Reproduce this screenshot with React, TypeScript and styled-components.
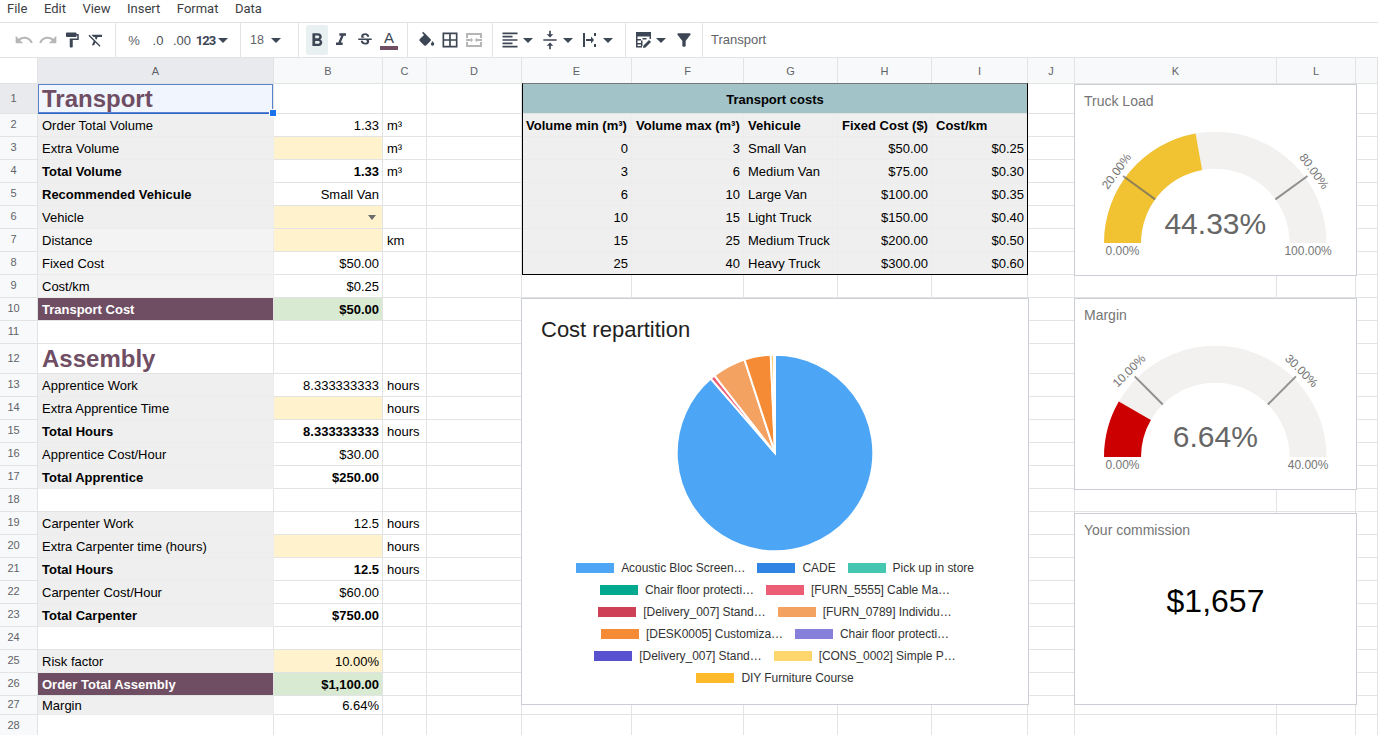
import styled, { createGlobalStyle } from 'styled-components'
import {
  MdBorderAll,
  MdFilterAlt,
  MdFormatAlignLeft,
  MdFormatBold,
  MdFormatClear,
  MdFormatItalic,
  MdFormatPaint,
  MdRedo,
  MdStrikethroughS,
  MdUndo,
  MdVerticalAlignCenter,
} from 'react-icons/md'

import type { ReactNode } from 'react'

const PURPLE = '#6f4e64'
const GREY = '#efefef'
const LIGHT_GREY = '#f3f3f3'
const INPUT = '#fff2cc'
const GREEN = '#d9ead3'
const TEAL = '#a2c4c9'
const LINE = '#e2e3e3'
const ICON = '#3c4654'

const COLUMNS = ['A', 'B', 'C', 'D', 'E', 'F', 'G', 'H', 'I', 'J', 'K', 'L', 'M']
const TEMPLATE = '38px 236px 109px 44px 95px 110px 112px 94px 94px 96px 47px 202px 79px 22px'

const GlobalStyle = createGlobalStyle`
  html, body {
    margin: 0;
    height: 100%;
    overflow: hidden;
    background: #fff;
  }
`

const Page = styled.div`
  width: 1378px;
  height: 735px;
  overflow: hidden;
  font-family: 'Liberation Sans', Arial, sans-serif;
  color: #000;
`

const MenuBar = styled.div`
  display: flex;
  align-items: center;
  gap: 16.5px;
  height: 23px;
  box-sizing: border-box;
  padding: 0 0 5px 7px;
  border-bottom: 1px solid ${LINE};
  font-family: Roboto, sans-serif;
  font-size: 13px;
  color: #3c4043;
`

const Toolbar = styled.div`
  display: flex;
  height: 35px;
  box-sizing: border-box;
  border-bottom: 1px solid ${LINE};
`

const ToolGroup = styled.div<{ $width: number; $pad: number; $gap?: number }>`
  display: flex;
  align-items: center;
  flex: none;
  width: ${(p) => p.$width}px;
  box-sizing: border-box;
  padding-left: ${(p) => p.$pad}px;
  gap: ${(p) => p.$gap ?? 0}px;
  border-right: 1px solid ${LINE};
`

const ToolSlot = styled.div<{ $off?: boolean; $active?: boolean; $wide?: number }>`
  display: flex;
  align-items: center;
  justify-content: center;
  flex: none;
  width: ${(p) => p.$wide ?? 24}px;
  height: 30px;
  border-radius: 2px;
  color: ${(p) => (p.$off ? '#b4b6b8' : ICON)};
  background: ${(p) => (p.$active ? '#e8f0f1' : 'transparent')};
  font-size: 13px;
`

const ActiveSlot = styled(ToolSlot)`
  width: 22px;
  margin: 0 1px;
`

const FormatText = styled.span<{ $muted?: boolean }>`
  font-size: 13px;
  color: ${(p) => (p.$muted ? '#5f6368' : '#4a4f55')};
`

const NumberFormat = styled.span`
  font-family: 'Roboto', sans-serif;
  font-size: 13px;
  font-weight: 700;
  letter-spacing: -1px;
  color: ${ICON};
`

const Caret = styled.span<{ $color?: string }>`
  flex: none;
  width: 0;
  height: 0;
  margin: 0 auto;
  border-left: 5px solid transparent;
  border-right: 5px solid transparent;
  border-top: 5px solid ${(p) => p.$color ?? ICON};
`

const CaretSlot = styled.div`
  display: flex;
  flex: none;
  width: 11px;
`

const ToolPair = styled.div`
  display: flex;
  align-items: center;
`

const FontSize = styled.div`
  display: flex;
  align-items: center;
  justify-content: space-between;
  flex: 1;
  padding-right: 10px;
  font-size: 12.5px;
  color: #5f6368;
`

const TextColor = styled.div`
  display: flex;
  flex-direction: column;
  align-items: center;
  width: 18px;
  font-size: 15px;
  line-height: 15px;
  color: ${ICON};
`

const TextColorBar = styled.span`
  display: block;
  width: 18px;
  height: 4px;
  margin-top: 1px;
  background: ${PURPLE};
`

const FormulaText = styled.div`
  display: flex;
  align-items: center;
  padding: 0 0 1px 8px;
  font-size: 13px;
  color: #5f6368;
`

const Sheet = styled.div`
  position: relative;
`

const GridRow = styled.div<{ $height: number }>`
  display: grid;
  grid-template-columns: ${TEMPLATE};
  height: ${(p) => p.$height}px;
`

const CornerCell = styled.div`
  box-sizing: border-box;
  border-right: 1px solid ${LINE};
  border-bottom: 1px solid ${LINE};
`

const ColumnHead = styled.div<{ $selected?: boolean }>`
  display: flex;
  align-items: center;
  justify-content: center;
  box-sizing: border-box;
  border-right: 1px solid ${LINE};
  border-bottom: 1px solid ${LINE};
  background: ${(p) => (p.$selected ? '#e8eaed' : '#f8f9fa')};
  font-size: 11px;
  color: #5f6368;
`

const RowHead = styled.div<{ $selected?: boolean }>`
  display: flex;
  align-items: center;
  justify-content: center;
  box-sizing: border-box;
  padding: 0 10px 2px 0;
  border-right: 1px solid ${LINE};
  border-bottom: 1px solid ${LINE};
  background: ${(p) => (p.$selected ? '#e8eaed' : '#f8f9fa')};
  font-size: 11px;
  color: #5f6368;
`

const Cell = styled.div<{
  $bg?: string
  $bold?: boolean
  $right?: boolean
  $center?: boolean
  $span?: number
  $title?: boolean
  $white?: boolean
  $selected?: boolean
}>`
  position: relative;
  display: flex;
  align-items: center;
  justify-content: ${(p) => (p.$right ? 'flex-end' : p.$center ? 'center' : 'flex-start')};
  grid-column: span ${(p) => p.$span ?? 1};
  box-sizing: border-box;
  padding: 1px 3px 0 4px;
  white-space: nowrap;
  border-right: 1px solid ${(p) => (p.$bg === GREY || p.$bg === LIGHT_GREY ? '#ececec' : LINE)};
  border-bottom: 1px solid ${(p) => (p.$bg === GREY || p.$bg === LIGHT_GREY ? '#ececec' : LINE)};
  background: ${(p) => p.$bg ?? '#fff'};
  font-size: ${(p) => (p.$title ? '24px' : '13px')};
  font-weight: ${(p) => (p.$bold || p.$title ? 700 : 400)};
  color: ${(p) => (p.$title ? PURPLE : p.$white ? '#fff' : '#000')};
  ${(p) => (p.$selected ? 'background: #f1f6fe; box-shadow: inset 0 0 0 1px #5a83cf; border-bottom-color: #2f68c9;' : '')}
`

const SelectionHandle = styled.span`
  position: absolute;
  right: -4px;
  bottom: -4px;
  z-index: 2;
  width: 6px;
  height: 6px;
  border: 0.5px solid #fff;
  background: #1a73e8;
`

const CellCaret = styled.span`
  width: 0;
  height: 0;
  margin-right: 3px;
  border-left: 4.5px solid transparent;
  border-right: 4.5px solid transparent;
  border-top: 5px solid #6b6b6b;
`

const TableFrame = styled.div`
  position: absolute;
  left: 522px;
  top: 25px;
  width: 506px;
  height: 192px;
  box-sizing: border-box;
  border: 1px solid #000;
  border-top-color: #777;
  pointer-events: none;
`

const FloatCard = styled.div<{ $left: number; $top: number; $width: number; $height: number }>`
  position: absolute;
  left: ${(p) => p.$left}px;
  top: ${(p) => p.$top}px;
  display: flex;
  flex-direction: column;
  width: ${(p) => p.$width}px;
  height: ${(p) => p.$height}px;
  box-sizing: border-box;
  border: 1px solid #ccced6;
  background: #fff;
`

const CardTitle = styled.div`
  height: 33px;
  box-sizing: border-box;
  padding: 8px 0 0 9px;
  font-size: 14px;
  line-height: 17px;
  color: #757575;
`

const GaugeSvg = styled.svg`
  display: block;
`

const Scorecard = styled.div`
  padding-top: 36px;
  font-size: 32px;
  line-height: 36px;
  text-align: center;
  color: #000;
`

const PieTitle = styled.div`
  padding: 19px 0 0 19px;
  font-size: 22px;
  line-height: 24px;
  color: #222;
`

const PieSvg = styled.svg`
  display: block;
  margin: 11px auto 4px;
`

const Legend = styled.div`
  display: flex;
  flex-direction: column;
`

const LegendRow = styled.div`
  display: flex;
  justify-content: center;
  align-items: center;
  gap: 12px;
  height: 22px;
`

const LegendItem = styled.div`
  display: flex;
  align-items: center;
  gap: 7px;
  font-size: 12px;
  letter-spacing: -0.05px;
  white-space: nowrap;
  color: #333;
`

const Swatch = styled.span<{ $color: string }>`
  flex: none;
  width: 38px;
  height: 10px;
  background: ${(p) => p.$color};
`

interface CellDef {
  t?: ReactNode
  bg?: string
  bold?: boolean
  right?: boolean
  center?: boolean
  span?: number
  title?: boolean
  white?: boolean
  selected?: boolean
  skip?: boolean
}

interface RowDef {
  n: number
  h?: number
  cells: Record<string, CellDef>
}

const label = (t: string, bold = false, bg = GREY): CellDef => ({ t, bold, bg })
const num = (t: string, bold = false, bg?: string): CellDef => ({ t, bold, bg, right: true })
const input = (t?: ReactNode): CellDef => ({ t, bg: INPUT, right: true })
const total = (t: string): CellDef => ({ t, bold: true, bg: PURPLE, white: true })
const unit = (t: string): CellDef => ({ t })

const costRow = (min: string, max: string, name: string, fixed: string, km: string) => ({
  E: num(min, false, GREY),
  F: num(max, false, GREY),
  G: label(name),
  H: num(fixed, false, GREY),
  I: num(km, false, GREY),
})

const ROWS: RowDef[] = [
  {
    n: 1,
    h: 30,
    cells: {
      A: { t: <>Transport<SelectionHandle /></>, title: true, selected: true },
      E: { t: 'Transport costs', bold: true, center: true, bg: TEAL, span: 5 },
      F: { skip: true },
      G: { skip: true },
      H: { skip: true },
      I: { skip: true },
    },
  },
  {
    n: 2,
    cells: {
      A: label('Order Total Volume'),
      B: num('1.33'),
      C: unit('m³'),
      E: label('Volume min (m³)', true),
      F: label('Volume max (m³)', true),
      G: label('Vehicule', true),
      H: label('Fixed Cost ($)', true),
      I: label('Cost/km', true),
    },
  },
  {
    n: 3,
    cells: {
      A: label('Extra Volume'),
      B: input(),
      C: unit('m³'),
      ...costRow('0', '3', 'Small Van', '$50.00', '$0.25'),
    },
  },
  {
    n: 4,
    cells: {
      A: label('Total Volume', true),
      B: num('1.33', true),
      C: unit('m³'),
      ...costRow('3', '6', 'Medium Van', '$75.00', '$0.30'),
    },
  },
  {
    n: 5,
    cells: {
      A: label('Recommended Vehicule', true),
      B: num('Small Van'),
      ...costRow('6', '10', 'Large Van', '$100.00', '$0.35'),
    },
  },
  {
    n: 6,
    cells: {
      A: label('Vehicle'),
      B: input(<CellCaret />),
      ...costRow('10', '15', 'Light Truck', '$150.00', '$0.40'),
    },
  },
  {
    n: 7,
    cells: {
      A: label('Distance', false, LIGHT_GREY),
      B: input(),
      C: unit('km'),
      ...costRow('15', '25', 'Medium Truck', '$200.00', '$0.50'),
    },
  },
  {
    n: 8,
    cells: {
      A: label('Fixed Cost', false, LIGHT_GREY),
      B: num('$50.00'),
      ...costRow('25', '40', 'Heavy Truck', '$300.00', '$0.60'),
    },
  },
  { n: 9, cells: { A: label('Cost/km', false, LIGHT_GREY), B: num('$0.25') } },
  { n: 10, cells: { A: total('Transport Cost'), B: num('$50.00', true, GREEN) } },
  { n: 11, cells: {} },
  { n: 12, h: 30, cells: { A: { t: 'Assembly', title: true } } },
  { n: 13, cells: { A: label('Apprentice Work'), B: num('8.333333333'), C: unit('hours') } },
  { n: 14, cells: { A: label('Extra Apprentice Time'), B: input(), C: unit('hours') } },
  { n: 15, cells: { A: label('Total Hours', true), B: num('8.333333333', true), C: unit('hours') } },
  { n: 16, cells: { A: label('Apprentice Cost/Hour'), B: num('$30.00') } },
  { n: 17, cells: { A: label('Total Apprentice', true), B: num('$250.00', true) } },
  { n: 18, cells: {} },
  { n: 19, cells: { A: label('Carpenter Work'), B: num('12.5'), C: unit('hours') } },
  { n: 20, cells: { A: label('Extra Carpenter time (hours)'), B: input(), C: unit('hours') } },
  { n: 21, cells: { A: label('Total Hours', true), B: num('12.5', true), C: unit('hours') } },
  { n: 22, cells: { A: label('Carpenter Cost/Hour'), B: num('$60.00') } },
  { n: 23, cells: { A: label('Total Carpenter', true), B: num('$750.00', true) } },
  { n: 24, cells: {} },
  { n: 25, cells: { A: label('Risk factor'), B: input('10.00%') } },
  { n: 26, cells: { A: total('Order Total Assembly'), B: num('$1,100.00', true, GREEN) } },
  { n: 27, h: 19, cells: { A: label('Margin'), B: num('6.64%') } },
  { n: 28, cells: {} },
]

const LEGEND = [
  [
    ['#4da6f5', 'Acoustic Bloc Screen…'],
    ['#3085e3', 'CADE'],
    ['#45c6b1', 'Pick up in store'],
  ],
  [
    ['#03a98f', 'Chair floor protecti…'],
    ['#ec5e76', '[FURN_5555] Cable Ma…'],
  ],
  [
    ['#cd4056', '[Delivery_007] Stand…'],
    ['#f4a261', '[FURN_0789] Individu…'],
  ],
  [
    ['#f58b35', '[DESK0005] Customiza…'],
    ['#8680db', 'Chair floor protecti…'],
  ],
  [
    ['#5851d0', '[Delivery_007] Stand…'],
    ['#ffd66b', '[CONS_0002] Simple P…'],
  ],
  [['#ffba2b', 'DIY Furniture Course']],
]

//  pie slices as clockwise degrees from 12 o'clock
const SLICES = [
  { from: 0, to: 319.2, color: '#4da6f5' },
  { from: 319.2, to: 322, color: '#ec5e76' },
  { from: 322, to: 341.9, color: '#f4a261' },
  { from: 341.9, to: 357.5, color: '#f58b35' },
  { from: 357.5, to: 359.2, color: '#ffba2b' },
]

function slicePath(from: number, to: number): string {
  const r = 98.3
  const point = (deg: number) => {
    const rad = (deg * Math.PI) / 180
    return `${100 + r * Math.sin(rad)} ${100 - r * Math.cos(rad)}`
  }
  const large = to - from > 180 ? 1 : 0
  return `M100 100L${point(from)}A${r} ${r} 0 ${large} 1 ${point(to)}Z`
}

const CX = 140.3
const CY = 125
const OUTER = 111.3
const INNER = 74.3

function polar(fraction: number, r: number): [number, number] {
  const rad = Math.PI * (1 - fraction)
  return [CX + r * Math.cos(rad), CY - r * Math.sin(rad)]
}

function bandPath(from: number, to: number): string {
  const [x0, y0] = polar(from, OUTER)
  const [x1, y1] = polar(to, OUTER)
  const [x2, y2] = polar(to, INNER)
  const [x3, y3] = polar(from, INNER)
  return `M${x0} ${y0}A${OUTER} ${OUTER} 0 0 1 ${x1} ${y1}L${x2} ${y2}A${INNER} ${INNER} 0 0 0 ${x3} ${y3}Z`
}

interface GaugeProps {
  value: string
  valueY: number
  fraction: number
  color: string
  low: string
  high: string
  ticks: Array<{ at: number; text: string }>
}

function Gauge({ value, valueY, fraction, color, low, high, ticks }: GaugeProps): JSX.Element {
  return (
    <GaugeSvg width="281" height="150" viewBox="0 0 281 150">
      <path d={bandPath(0, 1)} fill="#f2f1f0" />
      <path d={bandPath(0, fraction)} fill={color} />
      {ticks.map((tick) => {
        const [x0, y0] = polar(tick.at, INNER)
        const [x1, y1] = polar(tick.at, 114)
        const [tx, ty] = polar(tick.at, 122)
        const angle = 180 * tick.at - 90
        return (
          <g key={tick.text}>
            <line x1={x0} y1={y0} x2={x1} y2={y1} stroke="#666" strokeOpacity="0.7" strokeWidth="2" />
            <text
              x={tx}
              y={ty}
              fontSize="12"
              fill="#757575"
              textAnchor="middle"
              dominantBaseline="central"
              transform={`rotate(${angle} ${tx} ${ty})`}
            >
              {tick.text}
            </text>
          </g>
        )
      })}
      <text x={CX} y={valueY} fontSize="30" fill="#666" textAnchor="middle">
        {value}
      </text>
      <text x={CX - 92.8} y="137" fontSize="12" fill="#757575" textAnchor="middle">
        {low}
      </text>
      <text x={CX + 92.8} y="137" fontSize="12" fill="#757575" textAnchor="middle">
        {high}
      </text>
    </GaugeSvg>
  )
}

function FillIcon(): JSX.Element {
  return (
    <svg width="18" height="18" viewBox="0 0 22 20" fill="currentColor">
      <path d="M7.6 0 6.2 1.4l2.4 2.4-5.2 5.1c-.6.6-.6 1.6 0 2.2l5.5 5.5c.6.6 1.5.6 2.1 0l5.5-5.5c.6-.6.6-1.6 0-2.2z" />
      <path d="M19 11.5s-2 2.2-2 3.5c0 1.1.9 2 2 2s2-.9 2-2c0-1.3-2-3.5-2-3.5z" />
    </svg>
  )
}

function MergeIcon(): JSX.Element {
  return (
    <svg width="18" height="16" viewBox="0 0 18 16" fill="currentColor">
      <path d="M1 1h16v5h-2V3H3v3H1zM1 10h2v3h12v-3h2v5H1z" />
      <path d="M1 7h5V5.500L8 8l-2 2.500V9H1zM17 7h-5V5.500L10 8l2 2.500V9h5z" />
    </svg>
  )
}

function WrapIcon(): JSX.Element {
  return (
    <svg width="16" height="16" viewBox="0 0 16 16" fill="currentColor">
      <path d="M1 1h2v14H1zM12 1h2v3h-2zM12 12h2v3h-2z" />
      <path d="M4 7h5V4.500L12 8l-3 3.500V9H4z" />
    </svg>
  )
}

function FilterViewsIcon(): JSX.Element {
  return (
    <svg width="17" height="18" viewBox="0 0 17 18" fill="currentColor">
      <path d="M1 1h15v7h-1.500V5.500H2.500V8H6v1.500H2.500V12H6v1.500H2.500V15H7v1.500H1z" />
      <path d="M7.500 7h4v1.500h-4zM6 9.500h1.500V15H6z" />
      <path d="M8.500 14.500 14 9l2 2-5.500 5.500-2.500.5z" />
    </svg>
  )
}

export default function App(): JSX.Element {
  return (
    <Page>
      <GlobalStyle />
      <MenuBar>
        <span>File</span>
        <span>Edit</span>
        <span>View</span>
        <span>Insert</span>
        <span>Format</span>
        <span>Data</span>
      </MenuBar>
      <Toolbar>
        <ToolGroup $width={116} $pad={12}>
          <ToolSlot $off><MdUndo size={20} /></ToolSlot>
          <ToolSlot $off><MdRedo size={20} /></ToolSlot>
          <ToolSlot><MdFormatPaint size={18} /></ToolSlot>
          <ToolSlot><MdFormatClear size={18} /></ToolSlot>
        </ToolGroup>
        <ToolGroup $width={125} $pad={6}>
          <ToolSlot><FormatText $muted>%</FormatText></ToolSlot>
          <ToolSlot><FormatText>.0</FormatText></ToolSlot>
          <ToolSlot><FormatText>.00</FormatText></ToolSlot>
          <ToolSlot $wide={23}><NumberFormat>123</NumberFormat></ToolSlot>
          <CaretSlot><Caret /></CaretSlot>
        </ToolGroup>
        <ToolGroup $width={58} $pad={9}>
          <FontSize>
            18
            <Caret />
          </FontSize>
        </ToolGroup>
        <ToolGroup $width={109} $pad={6}>
          <ActiveSlot $active><MdFormatBold size={23} /></ActiveSlot>
          <ToolSlot><MdFormatItalic size={20} /></ToolSlot>
          <ToolSlot><MdStrikethroughS size={18} /></ToolSlot>
          <ToolSlot>
            <TextColor>
              A
              <TextColorBar />
            </TextColor>
          </ToolSlot>
        </ToolGroup>
        <ToolGroup $width={85} $pad={6}>
          <ToolSlot><FillIcon /></ToolSlot>
          <ToolSlot><MdBorderAll size={20} /></ToolSlot>
          <ToolSlot $off><MergeIcon /></ToolSlot>
        </ToolGroup>
        <ToolGroup $width={133} $pad={5} $gap={5}>
          <ToolPair>
            <ToolSlot><MdFormatAlignLeft size={20} /></ToolSlot>
            <CaretSlot><Caret /></CaretSlot>
          </ToolPair>
          <ToolPair>
            <ToolSlot><MdVerticalAlignCenter size={20} /></ToolSlot>
            <CaretSlot><Caret /></CaretSlot>
          </ToolPair>
          <ToolPair>
            <ToolSlot><WrapIcon /></ToolSlot>
            <CaretSlot><Caret /></CaretSlot>
          </ToolPair>
        </ToolGroup>
        <ToolGroup $width={77} $pad={5} $gap={6}>
          <ToolPair>
            <ToolSlot><FilterViewsIcon /></ToolSlot>
            <CaretSlot><Caret /></CaretSlot>
          </ToolPair>
          <ToolSlot><MdFilterAlt size={20} /></ToolSlot>
        </ToolGroup>
        <FormulaText>Transport</FormulaText>
      </Toolbar>
      <Sheet>
        <GridRow $height={26}>
          <CornerCell />
          {COLUMNS.map((col) => (
            <ColumnHead key={col} $selected={col === 'A'}>
              {col === 'M' ? '' : col}
            </ColumnHead>
          ))}
        </GridRow>
        {ROWS.map((row) => (
          <GridRow key={row.n} $height={row.h ?? 23}>
            <RowHead $selected={row.n === 1}>{row.n}</RowHead>
            {COLUMNS.map((col) => {
              const cell = row.cells[col] ?? {}
              if (cell.skip) return null
              return (
                <Cell
                  key={col}
                  $bg={cell.bg}
                  $bold={cell.bold}
                  $right={cell.right}
                  $center={cell.center}
                  $span={cell.span}
                  $title={cell.title}
                  $white={cell.white}
                  $selected={cell.selected}
                >
                  {cell.t}
                </Cell>
              )
            })}
          </GridRow>
        ))}
        <TableFrame />
        <FloatCard $left={1074} $top={26} $width={283} $height={192}>
          <CardTitle>Truck Load</CardTitle>
          <Gauge
            value="44.33%"
            valueY={116}
            fraction={0.4433}
            color="#f1c232"
            low="0.00%"
            high="100.00%"
            ticks={[
              { at: 0.2, text: '20.00%' },
              { at: 0.8, text: '80.00%' },
            ]}
          />
        </FloatCard>
        <FloatCard $left={1074} $top={240} $width={283} $height={192}>
          <CardTitle>Margin</CardTitle>
          <Gauge
            value="6.64%"
            valueY={115}
            fraction={0.166}
            color="#cc0000"
            low="0.00%"
            high="40.00%"
            ticks={[
              { at: 0.25, text: '10.00%' },
              { at: 0.75, text: '30.00%' },
            ]}
          />
        </FloatCard>
        <FloatCard $left={1074} $top={455} $width={283} $height={192}>
          <CardTitle>Your commission</CardTitle>
          <Scorecard>$1,657</Scorecard>
        </FloatCard>
        <FloatCard $left={521} $top={240} $width={508} $height={407}>
          <PieTitle>Cost repartition</PieTitle>
          <PieSvg width="200" height="200" viewBox="0 0 200 200">
            {SLICES.map((slice) => (
              <path
                key={slice.color}
                d={slicePath(slice.from, slice.to)}
                fill={slice.color}
                stroke="#fff"
                strokeWidth="2"
              />
            ))}
          </PieSvg>
          <Legend>
            {LEGEND.map((items, i) => (
              <LegendRow key={i}>
                {items.map(([color, text]) => (
                  <LegendItem key={text}>
                    <Swatch $color={color} />
                    {text}
                  </LegendItem>
                ))}
              </LegendRow>
            ))}
          </Legend>
        </FloatCard>
      </Sheet>
    </Page>
  )
}
